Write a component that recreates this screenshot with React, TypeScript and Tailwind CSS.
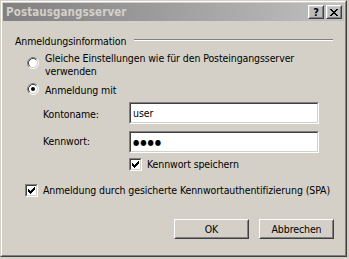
import React from "react";

function Radio({ checked }: { checked?: boolean }) {
  return (
    <svg width="12" height="12" viewBox="0 0 12 12" className="shrink-0">
      <circle cx="6" cy="6" r="4.5" fill="#ffffff" />
      <path d="M2.11 9.89 A5.5 5.5 0 0 1 9.89 2.11" fill="none" stroke="#808080" strokeWidth="1" />
      <path d="M9.89 2.11 A5.5 5.5 0 0 1 2.11 9.89" fill="none" stroke="#ffffff" strokeWidth="1" />
      <path d="M2.82 9.18 A4.5 4.5 0 0 1 9.18 2.82" fill="none" stroke="#404040" strokeWidth="1" />
      <path d="M9.18 2.82 A4.5 4.5 0 0 1 2.82 9.18" fill="none" stroke="#d4d0c8" strokeWidth="1" />
      {checked && <circle cx="6" cy="6" r="2" fill="#000000" />}
    </svg>
  );
}

function Check() {
  const cols = [
    [3, 5],
    [4, 6],
    [5, 7],
    [6, 6],
    [7, 5],
    [8, 4],
    [9, 3],
  ];
  return (
    <div className="w-[13px] h-[13px] shrink-0 border border-t-[#808080] border-l-[#808080] border-r-white border-b-white">
      <div className="w-full h-full border border-t-[#404040] border-l-[#404040] border-r-[#d4d0c8] border-b-[#d4d0c8] bg-white">
        <svg width="9" height="9" viewBox="2 2 9 9" shapeRendering="crispEdges">
          {cols.map(([x, y]) => (
            <rect key={x} x={x} y={y} width="1" height="3" fill="#000" />
          ))}
        </svg>
      </div>
    </div>
  );
}

function Input({ children }: { children?: React.ReactNode }) {
  return (
    <div className="w-[190px] h-[22px] border border-t-[#808080] border-l-[#808080] border-r-white border-b-white">
      <div className="w-full h-full border border-t-[#404040] border-l-[#404040] border-r-[#d4d0c8] border-b-[#d4d0c8] bg-white pl-[2px] flex items-center text-black">
        {children}
      </div>
    </div>
  );
}

function Button({ children, w, h }: { children: React.ReactNode; w: string; h: string }) {
  return (
    <div className={`${w} ${h} border border-t-white border-l-white border-r-[#404040] border-b-[#404040]`}>
      <div className="w-full h-full border border-t-[#d4d0c8] border-l-[#d4d0c8] border-r-[#808080] border-b-[#808080] flex items-center justify-center text-black">
        {children}
      </div>
    </div>
  );
}

export default function App() {
  return (
    <div className="w-[349px] h-[259px] bg-[#d4d0c8] font-['DejaVu_Sans_Condensed','DejaVu_Sans',sans-serif] text-[10.5px] tracking-[-0.1px] leading-[13px] text-black whitespace-nowrap">
      <div className="w-[347px] h-[257px] border border-t-[#d4d0c8] border-l-[#d4d0c8] border-r-[#404040] border-b-[#404040]">
        <div className="w-full h-full border border-t-white border-l-white border-r-[#808080] border-b-[#808080] p-px flex flex-col">
          {/* Title bar */}
          <div className="h-[18px] flex items-center bg-linear-to-r from-[#808080] to-[#c0c0c0]">
            <span className="pl-[3px] font-bold text-[11.5px] tracking-[0.1px] text-[#d4d0c8]">Postausgangsserver</span>
            <div className="ml-auto mr-[2px] flex gap-[2px]">
              <Button w="w-[16px]" h="h-[14px]">
                <span className="font-bold text-[11px] leading-none">?</span>
              </Button>
              <Button w="w-[16px]" h="h-[14px]">
                <svg width="8" height="7" viewBox="0 0 8 7" shapeRendering="crispEdges">
                  <path d="M0 0h2v1h-2z M6 0h2v1h-2z M1 1h2v1h-2z M5 1h2v1h-2z M2 2h4v1h-4z M3 3h2v1h-2z M2 4h4v1h-4z M1 5h2v1h-2z M5 5h2v1h-2z M0 6h2v1h-2z M6 6h2v1h-2z" fill="#000" />
                </svg>
              </Button>
            </div>
          </div>

          {/* Body */}
          <div className="flex flex-col">
            <div className="mt-[14px] ml-[12px] w-[318px] h-[13px] flex items-start">
              <span>Anmeldungsinformation</span>
              <div className="flex-1 ml-[8px] mt-[4px] h-[2px] border-t border-t-[#808080] border-b border-b-white" />
            </div>

            <div className="mt-[4px] ml-[24px] flex items-start">
              <div className="mt-[5px]">
                <Radio />
              </div>
              <span className="ml-[6px]">
                Gleiche Einstellungen wie für den Posteingangsserver
                <br />
                verwenden
              </span>
            </div>

            <div className="mt-[6px] ml-[24px] flex items-start">
              <div className="-mt-px">
                <Radio checked />
              </div>
              <span className="ml-[6px]">Anmeldung mit</span>
            </div>

            <div className="mt-[5px] ml-[40px] flex items-start">
              <span className="w-[86px] mt-[6px]">Kontoname:</span>
              <Input>
                <span>user</span>
              </Input>
            </div>

            <div className="mt-[7px] ml-[40px] flex items-start">
              <span className="w-[86px] mt-[4px]">Kennwort:</span>
              <Input>
                <span className="text-[8px] tracking-[1px]">●●●●</span>
              </Input>
            </div>

            <div className="mt-[5px] ml-[126px] flex items-start">
              <Check />
              <span className="ml-[5px]">Kennwort speichern</span>
            </div>

            <div className="mt-[13px] ml-[22px] flex items-start">
              <Check />
              <span className="ml-[5px]">Anmeldung durch gesicherte Kennwortauthentifizierung (SPA)</span>
            </div>

            <div className="mt-[22px] ml-[171px] flex gap-[10px]">
              <Button w="w-[75px]" h="h-[20px]">OK</Button>
              <Button w="w-[75px]" h="h-[20px]">Abbrechen</Button>
            </div>
          </div>
        </div>
      </div>
    </div>
  );
}
